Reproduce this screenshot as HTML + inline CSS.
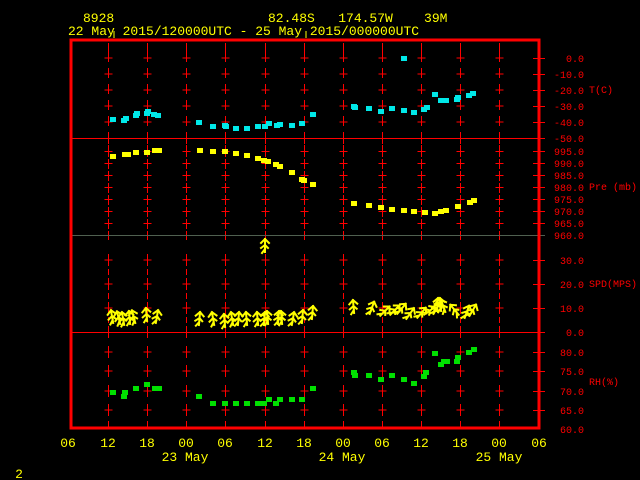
<!DOCTYPE html>
<html><head><meta charset="utf-8"><style>
html,body{margin:0;padding:0;background:#000;width:640px;height:480px;overflow:hidden}
svg{display:block}
text{font-family:"Liberation Mono",monospace}
</style></head><body>
<svg width="640" height="480" viewBox="0 0 640 480" shape-rendering="crispEdges">
<defs>
<g id="col" stroke="#ff0000" stroke-width="1" fill="none">
<path d="M0 43V62M0 68V78M0 84V94M0 100V110M0 116V126M0 132V144"/>
<path d="M-4 58H4M-4 74H4M-4 90H4M-4 106H4M-4 122H4"/>
<path d="M0 145V157M0 159V169M0 171V181M0 183V193M0 195V205M0 207V217M0 219V229M0 231V240"/>
<path d="M-4 151.5H4M-4 163.5H4M-4 175.5H4M-4 187.5H4M-4 199.5H4M-4 211.5H4M-4 223.5H4"/>
<path d="M0 254V266M0 269V275M0 278V290M0 293V299M0 302V314M0 317V323M0 326V338"/>
<path d="M-4 260H4M-4 284H4M-4 308H4"/>
<path d="M0 346V358M0 365V377M0 385V397M0 404V416M0 421V427"/>
<path d="M-4 352H4M-4 371H4M-4 391H4M-4 410H4"/>
</g>
<g id="b" stroke="#ffff00" stroke-width="2" fill="none" shape-rendering="auto" stroke-linecap="square">
<path d="M0 1V-12M-4 -8L0 -12L4 -8M0 -2L-3 2M0 -6L-4 -3M0 -6L3 -3"/>
</g>
<rect id="c" width="6" height="5" fill="#00e8e8"/>
<rect id="y" width="6" height="5" fill="#ffff00"/>
<rect id="g" width="6" height="5" fill="#00e000"/>
</defs>

<text x="83" y="22" fill="#ffff00" font-size="13">8928</text>
<text x="268" y="22" fill="#ffff00" font-size="13" xml:space="preserve">82.48S   174.57W    39M</text>
<text x="68" y="35" fill="#ffff00" font-size="13">22 May 2015/120000UTC - 25 May 2015/000000UTC</text>
<path d="M114 31V38M306 31V38" stroke="#ffff00"/>

<use href="#col" x="108.5"/><use href="#col" x="147.5"/><use href="#col" x="186.5"/><use href="#col" x="225.5"/>
<use href="#col" x="265.5"/><use href="#col" x="304.5"/><use href="#col" x="343.5"/><use href="#col" x="382.5"/>
<use href="#col" x="421.5"/><use href="#col" x="460.5"/><use href="#col" x="499.5"/>

<path d="M72 138.5H545M72 332.5H545" stroke="#ff0000" stroke-width="1"/>
<path d="M72 235.5H545" stroke="#506050" stroke-width="1"/>
<rect x="71" y="40" width="468" height="388" fill="none" stroke="#ff0000" stroke-width="3"/>
<path stroke="#ff0000" d="M533 58.5H545M533 74.5H545M533 90.5H545M533 106.5H545M533 122.5H545M533 151.5H545M533 163.5H545M533 175.5H545M533 187.5H545M533 199.5H545M533 211.5H545M533 223.5H545M533 260.5H545M533 284.5H545M533 308.5H545M533 352.5H545M533 371.5H545M533 391.5H545M533 410.5H545"/>

<g fill="#ff0000" font-size="10" text-anchor="end">
<text x="584" y="62">0.0</text><text x="584" y="78">-10.0</text><text x="584" y="94">-20.0</text><text x="584" y="110">-30.0</text><text x="584" y="126">-40.0</text><text x="584" y="142">-50.0</text>
<text x="584" y="155">995.0</text><text x="584" y="167">990.0</text><text x="584" y="179">985.0</text><text x="584" y="191">980.0</text><text x="584" y="203">975.0</text><text x="584" y="215">970.0</text><text x="584" y="227">965.0</text><text x="584" y="239">960.0</text>
<text x="584" y="264">30.0</text><text x="584" y="288">20.0</text><text x="584" y="312">10.0</text><text x="584" y="336">0.0</text>
<text x="584" y="356">80.0</text><text x="584" y="375">75.0</text><text x="584" y="395">70.0</text><text x="584" y="414">65.0</text><text x="584" y="433">60.0</text>
</g>
<g fill="#ff0000" font-size="10">
<text x="589" y="93">T(C)</text><text x="589" y="190">Pre (mb)</text><text x="589" y="287">SPD(MPS)</text><text x="589" y="385">RH(%)</text>
</g>

<g fill="#ffff00" font-size="13" text-anchor="middle">
<text x="68" y="447">06</text><text x="108" y="447">12</text><text x="147" y="447">18</text><text x="186" y="447">00</text><text x="225" y="447">06</text><text x="265" y="447">12</text><text x="304" y="447">18</text><text x="343" y="447">00</text><text x="382" y="447">06</text><text x="421" y="447">12</text><text x="460" y="447">18</text><text x="499" y="447">00</text><text x="539" y="447">06</text>
<text x="185" y="461">23 May</text><text x="342" y="461">24 May</text><text x="499" y="461">25 May</text>
<text x="19" y="478">2</text>
</g>

<g transform="translate(-3,-2)">
<use href="#c" x="113" y="119"/><use href="#c" x="124" y="120"/><use href="#c" x="126" y="118"/><use href="#c" x="136" y="115"/><use href="#c" x="137" y="113"/><use href="#c" x="147" y="113"/><use href="#c" x="148" y="111"/><use href="#c" x="154" y="114"/><use href="#c" x="158" y="115"/>
<use href="#c" x="199" y="122"/><use href="#c" x="213" y="126"/><use href="#c" x="225" y="125"/><use href="#c" x="226" y="126"/><use href="#c" x="236" y="128"/><use href="#c" x="247" y="128"/><use href="#c" x="258" y="126"/><use href="#c" x="265" y="126"/><use href="#c" x="269" y="123"/><use href="#c" x="277" y="125"/><use href="#c" x="280" y="124"/><use href="#c" x="292" y="125"/><use href="#c" x="302" y="123"/><use href="#c" x="313" y="114"/>
<use href="#c" x="354" y="106"/><use href="#c" x="355" y="107"/><use href="#c" x="369" y="108"/><use href="#c" x="381" y="111"/><use href="#c" x="392" y="108"/><use href="#c" x="404" y="110"/><use href="#c" x="414" y="112"/><use href="#c" x="424" y="109"/><use href="#c" x="427" y="107"/>
<use href="#c" x="404" y="58"/><use href="#c" x="435" y="94"/><use href="#c" x="441" y="100"/><use href="#c" x="446" y="100"/><use href="#c" x="457" y="99"/><use href="#c" x="458" y="97"/><use href="#c" x="469" y="95"/><use href="#c" x="473" y="93"/>
</g>
<g transform="translate(-3,-2)">
<use href="#y" x="113" y="156"/><use href="#y" x="125" y="154"/><use href="#y" x="128" y="154"/><use href="#y" x="136" y="152"/><use href="#y" x="147" y="152"/><use href="#y" x="155" y="150"/><use href="#y" x="159" y="150"/>
<use href="#y" x="200" y="150"/><use href="#y" x="213" y="151"/><use href="#y" x="225" y="151"/><use href="#y" x="236" y="153"/><use href="#y" x="247" y="155"/><use href="#y" x="258" y="158"/><use href="#y" x="264" y="160"/><use href="#y" x="268" y="161"/><use href="#y" x="276" y="164"/><use href="#y" x="280" y="166"/><use href="#y" x="292" y="172"/><use href="#y" x="302" y="179"/><use href="#y" x="304" y="180"/><use href="#y" x="313" y="184"/>
<use href="#y" x="354" y="203"/><use href="#y" x="369" y="205"/><use href="#y" x="381" y="207"/><use href="#y" x="392" y="209"/><use href="#y" x="404" y="210"/><use href="#y" x="414" y="211"/><use href="#y" x="425" y="212"/><use href="#y" x="435" y="213"/><use href="#y" x="441" y="211"/><use href="#y" x="446" y="210"/><use href="#y" x="458" y="206"/><use href="#y" x="470" y="202"/><use href="#y" x="474" y="200"/>
</g>
<g transform="translate(-3,-2)">
<use href="#g" x="113" y="392"/><use href="#g" x="125" y="392"/><use href="#g" x="124" y="396"/><use href="#g" x="136" y="388"/><use href="#g" x="147" y="384"/><use href="#g" x="155" y="388"/><use href="#g" x="159" y="388"/>
<use href="#g" x="199" y="396"/><use href="#g" x="213" y="403"/><use href="#g" x="225" y="403"/><use href="#g" x="236" y="403"/><use href="#g" x="247" y="403"/><use href="#g" x="258" y="403"/><use href="#g" x="264" y="403"/><use href="#g" x="269" y="399"/><use href="#g" x="276" y="403"/><use href="#g" x="280" y="399"/><use href="#g" x="292" y="399"/><use href="#g" x="302" y="399"/><use href="#g" x="313" y="388"/>
<use href="#g" x="354" y="372"/><use href="#g" x="355" y="375"/><use href="#g" x="369" y="375"/><use href="#g" x="381" y="379"/><use href="#g" x="392" y="375"/><use href="#g" x="404" y="379"/><use href="#g" x="414" y="383"/><use href="#g" x="424" y="376"/><use href="#g" x="426" y="372"/>
<use href="#g" x="435" y="353"/><use href="#g" x="441" y="364"/><use href="#g" x="444" y="361"/><use href="#g" x="447" y="361"/><use href="#g" x="457" y="361"/><use href="#g" x="458" y="357"/><use href="#g" x="469" y="352"/><use href="#g" x="474" y="349"/>
</g>
<g>
<use href="#b" transform="translate(265,251)"/>
<use href="#b" transform="translate(113,322) rotate(-10)"/><use href="#b" transform="translate(120,323) rotate(-15)"/><use href="#b" transform="translate(124,324) rotate(-10)"/><use href="#b" transform="translate(130,323) rotate(-5)"/><use href="#b" transform="translate(135,322) rotate(-15)"/><use href="#b" transform="translate(147,320) rotate(-5)"/><use href="#b" transform="translate(156,322) rotate(10)"/>
<use href="#b" transform="translate(199,324) rotate(5)"/><use href="#b" transform="translate(214,324) rotate(-10)"/><use href="#b" transform="translate(225,326) rotate(-5)"/><use href="#b" transform="translate(233,324) rotate(-10)"/><use href="#b" transform="translate(238,324) rotate(5)"/><use href="#b" transform="translate(247,324) rotate(-5)"/><use href="#b" transform="translate(258,324) rotate(-5)"/><use href="#b" transform="translate(264,324) rotate(5)"/><use href="#b" transform="translate(268,323) rotate(-5)"/><use href="#b" transform="translate(278,323) rotate(5)"/><use href="#b" transform="translate(282,323) rotate(-5)"/><use href="#b" transform="translate(292,324) rotate(10)"/><use href="#b" transform="translate(302,322) rotate(5)"/><use href="#b" transform="translate(312,318) rotate(5)"/>
<use href="#b" transform="translate(354,312) rotate(-5)"/><use href="#b" transform="translate(370,313) rotate(20)"/><use href="#b" transform="translate(381,315) rotate(45)"/><use href="#b" transform="translate(391,314) rotate(45)"/><use href="#b" transform="translate(398,313) rotate(40)"/><use href="#b" transform="translate(407,318) rotate(35)"/><use href="#b" transform="translate(418,317) rotate(40)"/><use href="#b" transform="translate(425,314) rotate(55)"/><use href="#b" transform="translate(434,313) rotate(30)"/><use href="#b" transform="translate(437,310) rotate(5)"/><use href="#b" transform="translate(441,310) rotate(-5)"/><use href="#b" transform="translate(445,311) rotate(-20)"/><use href="#b" transform="translate(458,314) rotate(-40)"/><use href="#b" transform="translate(465,317) rotate(20)"/><use href="#b" transform="translate(470,315) rotate(30)"/>
</g>
</svg>
</body></html>
